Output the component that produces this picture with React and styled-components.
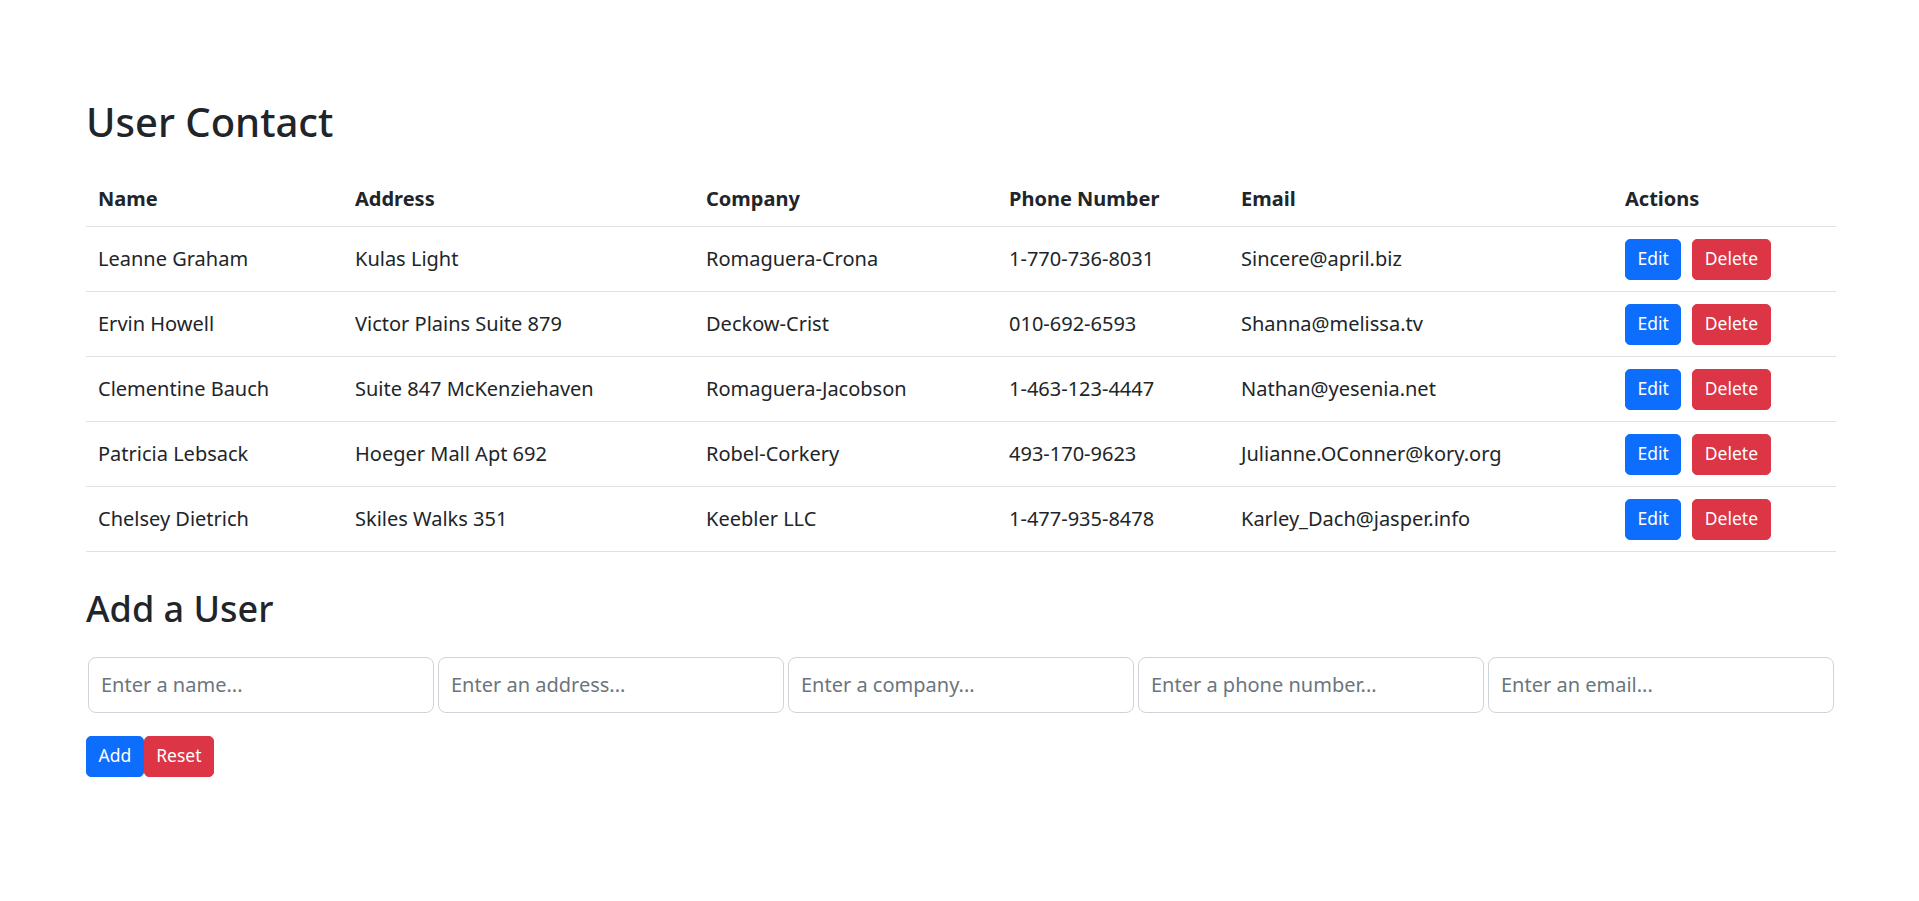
import React from 'react'
import styled, { createGlobalStyle } from 'styled-components'

const users = [
  { name: 'Leanne Graham', address: 'Kulas Light', company: 'Romaguera-Crona', phone: '1-770-736-8031', email: 'Sincere@april.biz' },
  { name: 'Ervin Howell', address: 'Victor Plains Suite 879', company: 'Deckow-Crist', phone: '010-692-6593', email: 'Shanna@melissa.tv' },
  { name: 'Clementine Bauch', address: 'Suite 847 McKenziehaven', company: 'Romaguera-Jacobson', phone: '1-463-123-4447', email: 'Nathan@yesenia.net' },
  { name: 'Patricia Lebsack', address: 'Hoeger Mall Apt 692', company: 'Robel-Corkery', phone: '493-170-9623', email: 'Julianne.OConner@kory.org' },
  { name: 'Chelsey Dietrich', address: 'Skiles Walks 351', company: 'Keebler LLC', phone: '1-477-935-8478', email: 'Karley_Dach@jasper.info' },
]

const columns = [
  { label: 'Name', width: 257 },
  { label: 'Address', width: 351 },
  { label: 'Company', width: 303 },
  { label: 'Phone Number', width: 232 },
  { label: 'Email', width: 384 },
  { label: 'Actions', width: 223 },
]

const placeholders = [
  'Enter a name...',
  'Enter an address...',
  'Enter a company...',
  'Enter a phone number...',
  'Enter an email...',
]

const App = () => {
  return (
    <React.Fragment>
      <GlobalStyle />
      <Container>
        <Title>User Contact</Title>
        <Table>
          <colgroup>
            {columns.map(col => <col key={col.label} style={{ width: col.width }} />)}
          </colgroup>
          <thead>
            <tr>
              {columns.map(col => <Th key={col.label}>{col.label}</Th>)}
            </tr>
          </thead>
          <tbody>
            {users.map(user => (
              <tr key={user.name}>
                <Td>{user.name}</Td>
                <Td>{user.address}</Td>
                <Td>{user.company}</Td>
                <Td>{user.phone}</Td>
                <Td>{user.email}</Td>
                <Td>
                  <Actions>
                    <Button variant="primary">Edit</Button>
                    <Button variant="danger">Delete</Button>
                  </Actions>
                </Td>
              </tr>
            ))}
          </tbody>
        </Table>

        <SubTitle>Add a User</SubTitle>
        <Form onSubmit={e => e.preventDefault()}>
          <Fields>
            {placeholders.map(p => <Input key={p} type="text" placeholder={p} />)}
          </Fields>
          <FormButtons>
            <Button variant="primary" type="submit">Add</Button>
            <Button variant="danger" type="reset">Reset</Button>
          </FormButtons>
        </Form>
      </Container>
    </React.Fragment>
  )
}

const colors = {
  primary: '#0d6efd',
  danger: '#dc3545',
}

const GlobalStyle = createGlobalStyle`
  * { box-sizing: border-box; }
  body {
    margin: 0;
    background: #fff;
    color: #212529;
    font-family: "Noto Sans", "Open Sans", sans-serif;
  }
`

const Container = styled.div`
  width: 1750px;
  margin-left: 86px;
  padding-top: 98px;
`

const Title = styled.h1`
  margin: 0 0 26px;
  font-size: 40px;
  font-weight: 500;
  line-height: 1.2;
`

const SubTitle = styled.h2`
  margin: 34.5px 0 27px;
  font-size: 36px;
  font-weight: 500;
  line-height: 1.2;
`

const Table = styled.table`
  width: 100%;
  border-collapse: collapse;
  table-layout: fixed;
  font-size: 20px;
`

const Th = styled.th`
  text-align: left;
  font-weight: 700;
  padding: 12px;
  line-height: 30px;
  border-bottom: 1px solid #dee2e6;
`

const Td = styled.td`
  padding: 11px 12px;
  line-height: 42px;
  vertical-align: middle;
  border-bottom: 1px solid #dee2e6;
  white-space: nowrap;
`

const Actions = styled.div`
  display: flex;
  align-items: center;
  gap: 11px;
`

const Button = styled.button`
  height: 41px;
  padding: 0 11.5px;
  border: 1px solid ${props => colors[props.variant]};
  border-radius: 5px;
  background-color: ${props => colors[props.variant]};
  color: #fff;
  font-family: inherit;
  font-size: 17.5px;
  line-height: 1;
  cursor: pointer;
`

const Form = styled.form`
  display: flex;
  flex-direction: column;
  gap: 23px;
`

const Fields = styled.div`
  display: flex;
`

const Input = styled.input`
  width: 346px;
  height: 56px;
  margin: 0 2px;
  padding: 0 12px;
  border: 1px solid #ced4da;
  border-radius: 8px;
  font-family: inherit;
  font-size: 20px;
  color: #212529;

  &::placeholder {
    color: #6c757d;
  }
`

const FormButtons = styled.div`
  display: flex;
`

export default App
